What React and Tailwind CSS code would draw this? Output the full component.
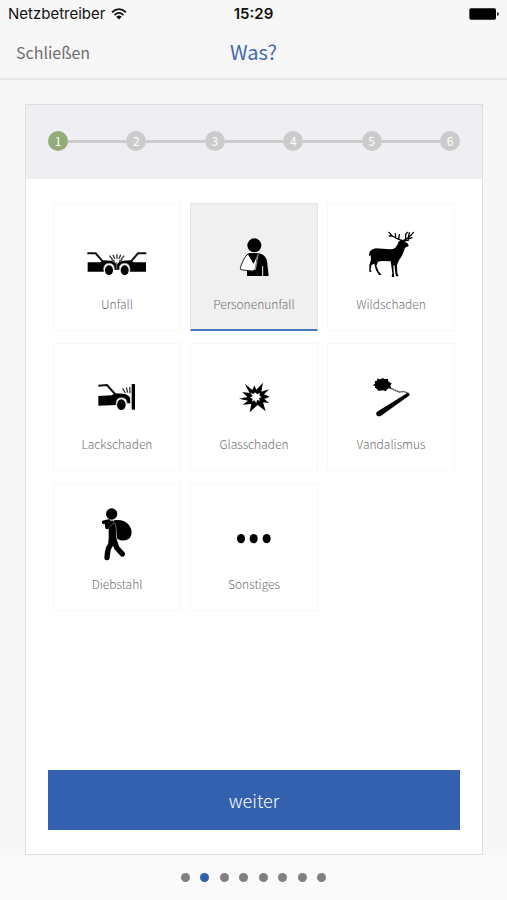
import { useState } from "react";
import clsx from "clsx";

const UnfallCar = () => (
  <>
    <path d="M112 160 H137 L158 184" fill="none" stroke="#111" strokeWidth="6" />
    <path d="M113 187 L150 187 L160 181 L182 182 Q198 186 202 196 V209 H190 L162 215 H113 Z" />
    <path d="M161 214 Q159 190 177 190 Q195 190 193 210 L190 216 H163 Z" fill="#fff" />
    <path d="M161 214 Q159 190 177 190 Q195 190 193 210" fill="none" stroke="#999" strokeWidth="2" />
    <ellipse cx="177" cy="211" rx="12" ry="15" />
  </>
);

const UnfallIcon = () => (
  <svg viewBox="105 75 192 168" className="h-14 w-16" aria-hidden="true">
    <UnfallCar />
    <g transform="translate(401 0) scale(-1 1)">
      <UnfallCar />
    </g>
    <path d="M200 186 V208" stroke="#777" strokeWidth="3" />
    <path
      d="M178 167 L188 178 M189 164 L194 176 M201 163 V176 M212 164 L207 176 M223 167 L213 178 M184 178 L194 184 M217 178 L207 184"
      fill="none"
      stroke="#333"
      strokeWidth="4"
    />
  </svg>
);

const PersonenunfallIcon = () => (
  <svg viewBox="111 75 192 168" className="h-14 w-16" aria-hidden="true">
    <circle cx="208" cy="136" r="21" />
    <path d="M190 160 H222 Q240 163 246 182 L251 228 H186 V212 Z" />
    <path d="M233 198 V228" stroke="#eee" strokeWidth="3" />
    <path
      d="M189 162 Q176 172 166 203 Q165 210 173 210 L202 213 Q211 212 212 203 L218 161 L206 188 Z"
      fill="#fff"
      stroke="#222"
      strokeWidth="3"
      strokeLinejoin="round"
    />
    <path d="M191 160 H216 L205 192 Z" />
    <path d="M220 161 L211 210" stroke="#ddd" strokeWidth="2" />
  </svg>
);

const WildschadenIcon = () => (
  <svg viewBox="102 75 192 168" className="h-14 w-16" aria-hidden="true">
    <path d="M133 158 Q138 148 152 145 L184 147 Q204 149 211 143 L220 130 L219 125 L226 123 L229 118 L237 122 L249 131 L251 138 L240 143 L236 156 Q230 171 222 181 L216 195 L217 219 L221 229 H213 L211 218 L208 194 L205 198 L207 226 L208 231 H200 L202 219 L197 184 L170 183 L159 185 L154 198 L162 216 L170 224 L162 225 L153 211 L148 191 L139 195 L137 209 L140 216 L133 215 L133 195 L138 179 L137 166 L132 168 Z" />
    <path
      d="M229 121 Q214 116 202 108 L192 97 M202 108 L193 108 M212 114 L211 101 M221 118 L223 104 M236 121 L246 116 L258 106 L265 97 M242 118 L242 103 L247 97 M250 113 L253 98 M250 117 L261 113 M239 122 L250 121"
      fill="none"
      stroke="#000"
      strokeWidth="4"
      strokeLinecap="round"
      strokeLinejoin="round"
    />
  </svg>
);

const LackschadenIcon = () => (
  <svg viewBox="105 75 192 168" className="h-14 w-16" aria-hidden="true">
    <path d="M145 137 L171 135 L195 162" fill="none" stroke="#111" strokeWidth="6" />
    <path d="M145 168 L186 166 L194 160 L220 161 Q235 164 240 172 L241 190 H229 L200 195 L145 197 Z" />
    <path d="M198 196 Q196 173 214 173 Q232 173 231 191 L228 197 H200 Z" fill="#fff" />
    <path d="M198 196 Q196 173 214 173 Q232 173 231 191" fill="none" stroke="#999" strokeWidth="2" />
    <ellipse cx="214" cy="194" rx="13" ry="16" />
    <path d="M245 132 H255 V209 H245 Z" />
    <path
      d="M218 145 L226 159 M229 142 L233 158 M239 141 L240 160"
      fill="none"
      stroke="#333"
      strokeWidth="4"
    />
  </svg>
);

const GlasschadenIcon = () => (
  <svg viewBox="111 75 192 168" className="h-14 w-16" aria-hidden="true">
    <path d="M179 131 L202 150 L208 136 L214 149 L234 128 L229 155 L252 148 L237 163 L254 170 L238 177 L252 189 L234 187 L242 214 L218 195 L194 217 L199 192 L173 194 L189 182 L162 176 L187 171 L172 156 L194 159 Z" />
    <path
      d="M196 158 L206 162 L210 157 L217 163 L225 158 L223 167 L230 171 L222 175 L225 182 L216 180 L214 189 L208 181 L201 185 L203 176 L195 173 L203 168 Z"
      fill="#fff"
    />
  </svg>
);

const VandalismusIcon = () => (
  <svg viewBox="102 75 192 168" className="h-14 w-16" aria-hidden="true">
    <ellipse cx="172" cy="134" rx="23" ry="17" />
    <path d="M157 115 L164 119 L173 114 L180 118 L189 116 L190 125 L200 130 L196 137 L199 146 L189 145 L182 154 L174 150 L160 153 L156 146 L150 143 L151 138 L143 136 L150 131 L149 124 L156 122 Z" />
    <path
      d="M196 144 L209 150 L222 156 L236 155 L251 160"
      fill="none"
      stroke="#444"
      strokeWidth="4"
      strokeDasharray="6 1"
    />
    <path d="M247 159 L255 162 L252 167 L168 227 Q162 231 156 227 Q151 222 155 216 Z" />
  </svg>
);

const DiebstahlIcon = () => (
  <svg viewBox="105 75 192 168" className="h-14 w-16" aria-hidden="true">
    <circle cx="185" cy="102" r="17" />
    <path d="M192 121 Q222 117 237 135 Q252 157 239 175 Q223 187 202 177 L197 140 Z" />
    <path
      d="M185 176 L182 194 Q174 203 173 215 L171 233 M191 176 L200 203 L217 222"
      fill="none"
      stroke="#000"
      strokeWidth="16"
      strokeLinecap="round"
      strokeLinejoin="round"
    />
    <path d="M176 122 H197 L200 190 L176 191 Z" />
    <path
      d="M161 127 L176 123 M170 128 L171 142 L187 128"
      fill="none"
      stroke="#000"
      strokeWidth="11"
      strokeLinecap="round"
      strokeLinejoin="round"
    />
    <path
      d="M177 143 L192 128 M189 122 Q199 130 199 150 V178"
      fill="none"
      stroke="#888"
      strokeWidth="2"
    />
  </svg>
);

const SonstigesIcon = () => (
  <svg viewBox="111 75 192 168" className="h-14 w-16" aria-hidden="true">
    <ellipse cx="168" cy="176" rx="12" ry="14" />
    <ellipse cx="206" cy="176" rx="12" ry="14" />
    <ellipse cx="245" cy="176" rx="12" ry="14" />
  </svg>
);

const damageTypes = [
  { label: "Unfall", Icon: UnfallIcon },
  { label: "Personenunfall", Icon: PersonenunfallIcon },
  { label: "Wildschaden", Icon: WildschadenIcon },
  { label: "Lackschaden", Icon: LackschadenIcon },
  { label: "Glasschaden", Icon: GlasschadenIcon },
  { label: "Vandalismus", Icon: VandalismusIcon },
  { label: "Diebstahl", Icon: DiebstahlIcon },
  { label: "Sonstiges", Icon: SonstigesIcon },
];

const StatusBar = () => (
  <div className="grid h-7 grid-cols-3 items-center px-2 font-['Inter',sans-serif] text-[15px] text-[#111]">
    <div className="flex items-center gap-1.5">
      <span>Netzbetreiber</span>
      <svg viewBox="0 0 46 34" className="h-3 w-4" aria-hidden="true">
        <path
          d="M3 12 Q23 -6 43 12 M10 20 Q23 8 36 20"
          fill="none"
          stroke="#111"
          strokeWidth="5"
        />
        <path d="M15 25 Q23 18 31 25 L23 33 Z" fill="#111" />
      </svg>
    </div>
    <div className="text-center font-semibold">15:29</div>
    <svg viewBox="0 0 90 36" className="h-3 w-[30px] justify-self-end" aria-hidden="true">
      <rect x="1" y="1" width="80" height="34" rx="5" />
      <path d="M84 12 Q90 13 90 18 Q90 23 84 24 Z" fill="#333" />
    </svg>
  </div>
);

const Stepper = ({ current }) => (
  <ol className="flex h-[74px] items-center bg-[#efeef3] px-[22px] pb-0.5">
    {[1, 2, 3, 4, 5, 6].map((step) => (
      <li key={step} className={clsx("flex items-center", step > 1 && "flex-1")}>
        {step > 1 && <span className="h-[3px] flex-1 bg-[#cbcbcb]" />}
        <span
          className={clsx(
            "flex size-5 items-center justify-center rounded-full text-xs leading-5 text-white",
            step === current ? "bg-[#93ab76]" : "bg-[#cbcbcb]"
          )}
        >
          {step}
        </span>
      </li>
    ))}
  </ol>
);

const Tile = ({ label, Icon, selected, onClick }) => (
  <button
    type="button"
    aria-pressed={selected}
    onClick={onClick}
    className={clsx(
      "flex h-32 flex-col items-center border pt-[21px]",
      selected
        ? "border-[#e6e6e6] border-b-2 border-b-[#4a77bd] bg-[#f0f0f0]"
        : "border-[#f8f8f8] bg-white"
    )}
  >
    <Icon />
    <span className="mt-[13px] text-xs leading-5 font-light text-[#707070]">{label}</span>
  </button>
);

const App = () => {
  const [selected, setSelected] = useState("Personenunfall");
  const [page, setPage] = useState(1);

  return (
    <div className="flex min-h-dvh flex-col bg-[#f7f7f7] font-['Noto_Sans_CJK_SC','Noto_Sans',sans-serif]">
      <header className="border-b-2 border-[#e6e6e6]">
        <StatusBar />
        <div className="grid h-[50px] grid-cols-3 items-center px-4 pb-0.5">
          <button type="button" className="justify-self-start text-base text-[#6e6e6e]">
            Schließen
          </button>
          <h1 className="text-center text-xl text-[#3f68b2]">Was?</h1>
        </div>
      </header>

      <main className="mt-6 mr-6 ml-[25px] flex flex-1 flex-col border border-[#dedede] bg-white">
        <Stepper current={1} />
        <div className="grid grid-cols-3 gap-x-[9px] gap-y-3 px-[27px] pt-6">
          {damageTypes.map(({ label, Icon }) => (
            <Tile
              key={label}
              label={label}
              Icon={Icon}
              selected={selected === label}
              onClick={() => setSelected(label)}
            />
          ))}
        </div>
        <button
          type="button"
          className="mx-[22px] mt-auto mb-6 h-[60px] bg-[#3460b0] text-lg font-light text-white"
        >
          weiter
        </button>
      </main>

      <nav aria-label="Seiten" className="flex h-[45px] items-center justify-center bg-[#fafafa]">
        <div className="flex w-[146px] justify-between">
          {Array.from({ length: 8 }, (_, i) => (
            <button
              key={i}
              type="button"
              aria-label={`Seite ${i + 1}`}
              onClick={() => setPage(i)}
              className={clsx("size-[9px] rounded-full", i === page ? "bg-[#2f5fad]" : "bg-[#808080]")}
            />
          ))}
        </div>
      </nav>
    </div>
  );
};

export default App;
